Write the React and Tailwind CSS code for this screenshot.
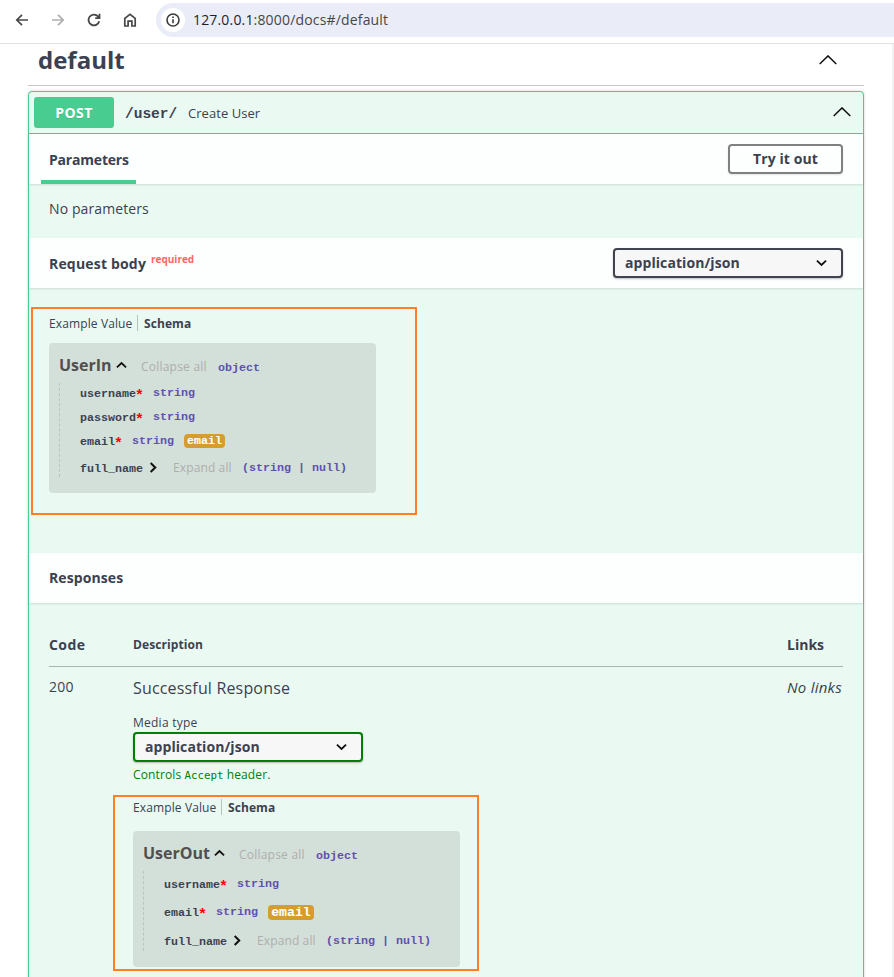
import React from "react";

const MONO = "font-['Liberation_Mono',monospace] text-[11.67px] leading-4 font-bold whitespace-pre";

function Chevron({ dir = "up", size = 10, w = 1.8, className = "" }) {
  const paths = { up: "M1 8 L6 3.4 L11 8", down: "M1 4 L6 8.6 L11 4", right: "M4 1 L9 6 L4 11" };
  return (
    <svg width={size} height={size} viewBox="0 0 12 12" fill="none" stroke="#111" strokeWidth={w} className={"shrink-0 " + className}>
      <path d={paths[dir]} />
    </svg>
  );
}

function BigChevron({ className = "" }) {
  return (
    <svg width="18" height="10" viewBox="0 0 18 10" fill="none" stroke="#111" strokeWidth="1.5" className={"shrink-0 " + className}>
      <path d="M0.7 9 L9 0.9 L17.3 9" />
    </svg>
  );
}

function SectionHeader({ children }) {
  return (
    <div className="flex h-[50px] shrink-0 items-center justify-between bg-[#fdfffe] px-5 shadow-[0_1px_2px_rgba(0,0,0,0.12)]">
      {children}
    </div>
  );
}

function Select({ green = false }) {
  return (
    <div className={"flex h-[30px] w-[230px] items-center justify-between rounded border-2 bg-[#f7f7f7] pr-[14px] pl-[10px] shadow-[0_1px_2px_rgba(0,0,0,0.25)] " + (green ? "border-[#008000]" : "border-[#41444e]")}>
      <span className="text-sm font-bold tracking-[0.08px]">application/json</span>
      <Chevron dir="down" w={2} size={11} className="-mt-px" />
    </div>
  );
}

function Tabs() {
  return (
    <div className="flex h-4 items-center text-xs whitespace-nowrap">
      <span className="w-[88px] pt-[2px] tracking-[0.12px]">Example Value</span>
      <span className="h-4 w-[7px] border-l border-[#b5c3bd]" />
      <span className="pt-[2px] font-bold tracking-[0.08px]">Schema</span>
    </div>
  );
}

function Field({ name, required, format, badge, className = "" }) {
  return (
    <div className={"flex h-4 items-center " + className}>
      <span className={MONO + " pt-[2px] text-[#3b4151]"}>{name}</span>
      {required && (
        <span className="w-[7px] pt-[7px] font-['Liberation_Mono',monospace] text-[15px] leading-4 font-bold text-[#f00] -indent-px">*</span>
      )}
      <span className={MONO + " ml-[10px] text-[#6050b0]"}>string</span>
      {format && (
        <span className={"ml-[10px] flex items-center justify-center rounded bg-[#d69d2e] pt-[2px] font-['Liberation_Mono',monospace] leading-none font-bold text-white " + badge}>
          {format}
        </span>
      )}
    </div>
  );
}

function FullName({ className = "" }) {
  return (
    <div className={"flex h-4 items-center " + className}>
      <span className={MONO + " w-[67px] pt-[2px] text-[#3b4151]"}>full_name</span>
      <Chevron dir="right" w={2.2} size={11} className="-mt-[2px]" />
      <span className="-mt-px ml-[15px] w-[69px] text-xs tracking-[0.12px] whitespace-nowrap text-[#afaeae]">Expand all</span>
      <span className={MONO + " text-[#6050b0]"}>(string | null)</span>
    </div>
  );
}

function ModelTitle({ name, width }) {
  return (
    <div className="flex h-6 items-center whitespace-nowrap">
      <span className={"text-base font-bold text-[#505050] " + width}>{name}</span>
      <Chevron w={2} size={11} />
      <span className="mt-[3px] ml-[14px] w-[77px] text-xs tracking-[0.22px] text-[#afaeae]">Collapse all</span>
      <span className={MONO + " mt-[6px] text-[#6050b0]"}>object</span>
    </div>
  );
}

function Toolbar() {
  return (
    <div className="flex h-11 shrink-0 items-start border-b border-[#dfe1e2] bg-white pt-[3px] pl-[14px] text-[#3c3c3c]">
      <div className="flex h-[34px] items-center">
        <svg width="16" height="16" viewBox="0 0 16 16" fill="none" stroke="#454746" strokeWidth="1.7">
          <path d="M14 8H3M8 2.8L2.8 8L8 13.2" />
        </svg>
        <svg width="16" height="16" viewBox="0 0 16 16" fill="none" stroke="#adaeae" strokeWidth="1.7" className="ml-5">
          <path d="M2 8H13M8 2.8L13.2 8L8 13.2" />
        </svg>
        <svg width="16" height="16" viewBox="0 0 16 16" fill="none" stroke="#454746" strokeWidth="1.8" className="ml-5">
          <path d="M13.2 9.2A5.4 5.4 0 1 1 12 4.4L13.4 5.8M13.5 1.8V6.2H9.2" />
        </svg>
        <svg width="16" height="16" viewBox="0 0 16 16" fill="none" stroke="#454746" strokeWidth="1.7" className="ml-5">
          <path d="M2.8 14V6.4L8 2.3L13.2 6.4V14H9.9V9.2H6.1V14Z" />
        </svg>
      </div>
      <div className="ml-[18px] flex h-[34px] grow items-center rounded-l-full bg-[#eaedf7] pl-[5px]">
        <span className="flex size-6 items-center justify-center rounded-full bg-white">
          <svg width="14" height="14" viewBox="0 0 14 14" fill="none" stroke="#3c3c3c" strokeWidth="1.6">
            <circle cx="7" cy="7" r="6" />
            <path d="M7 6.2V10.3M7 3.6V5.1" />
          </svg>
        </span>
        <span className="ml-2 text-sm tracking-[0.17px] whitespace-nowrap text-[#474747]">
          <span className="text-[#1f1f1f]">127.0.0.1</span>:8000/docs#/default
        </span>
      </div>
    </div>
  );
}

export default function App() {
  return (
    <div className="relative flex h-[977px] w-[894px] flex-col overflow-hidden bg-white font-['Open_Sans','Noto_Sans',sans-serif] text-[#3b4151]">
      <Toolbar />
      <div className="flex grow justify-between">
        <div className="ml-7 flex w-[836px] flex-col">
          <div className="flex h-[42px] shrink-0 items-center justify-between border-b border-[#c4c6ca] pr-[27px] pb-[9px] pl-[10px]">
            <h1 className="text-2xl font-bold">default</h1>
            <BigChevron />
          </div>

          <div className="mt-[5px] flex h-[900px] shrink-0 flex-col rounded border border-[#49cc90] bg-[#eafaf3] shadow-[0_0_3px_rgba(0,0,0,0.19)]">
            <div className="flex h-[42px] shrink-0 items-center border-b border-[#49cc90] px-[5px]">
              <span className="flex h-[31px] w-20 items-center justify-center rounded-[3px] bg-[#49cc90] text-sm font-bold tracking-[0.4px] text-white [text-shadow:0_1px_0_rgba(0,0,0,0.1)]">POST</span>
              <span className="ml-[11px] w-[63px] pt-[5px] font-['Liberation_Mono',monospace] text-[14.5px] font-bold">/user/</span>
              <span className="pt-[2px] text-[13px] tracking-[0.05px]">Create User</span>
              <BigChevron className="mr-[7px] mb-[2px] ml-auto" />
            </div>

            <SectionHeader>
              <div className="-ml-2 flex h-[50px] w-[95px] flex-col border-b-4 border-[#49cc90] pt-4 pl-2">
                <span className="text-sm font-bold tracking-[-0.2px]">Parameters</span>
              </div>
              <button className="h-[30px] w-[115px] rounded border-2 border-[#808080] text-sm font-bold tracking-[0.08px] shadow-[0_1px_2px_rgba(0,0,0,0.1)]">Try it out</button>
            </SectionHeader>
            <div className="h-[54px] shrink-0 px-5 pt-[15px] text-sm tracking-[0.1px]">No parameters</div>

            <SectionHeader>
              <div className="flex pt-[2px] whitespace-nowrap">
                <span className="w-[102px] text-sm font-bold tracking-[0.18px]">Request body</span>
                <span className="-mt-[2px] text-[10px] font-bold text-[#f66]">required</span>
              </div>
              <Select />
            </SectionHeader>
            <div className="flex h-[265px] shrink-0 flex-col px-5 pt-[27px]">
              <Tabs />
              <div className="mt-[12px] h-[150px] w-[327px] rounded bg-[#d3e0d9] pt-[10px] pl-[10px]">
                <ModelTitle name="UserIn" width="w-[57px]" />
                <div className="mt-[6px] flex h-[94px] flex-col border-l border-dashed border-[#b8c4be] pl-5">
                  <Field name="username" required className="mt-[2px]" />
                  <Field name="password" required className="mt-2" />
                  <Field name="email" required format="email" badge="h-[14px] w-[41px] text-[11.67px]" className="mt-2" />
                  <FullName className="mt-[11px]" />
                </div>
              </div>
            </div>

            <SectionHeader>
              <span className="text-sm font-bold tracking-[0.1px]">Responses</span>
            </SectionHeader>
            <div className="flex flex-col px-5 pt-[22px]">
              <div className="flex h-[42px] items-center border-b border-[#a9b5b3] pb-[2px] font-bold">
                <span className="w-[84px] text-sm tracking-[0.4px]">Code</span>
                <span className="text-xs tracking-[0.1px]">Description</span>
                <span className="ml-auto w-14 text-sm">Links</span>
              </div>
              <div className="flex items-start pt-[10px]">
                <span className="w-[84px] text-sm tracking-[0.3px]">200</span>
                <div className="flex flex-col">
                  <span className="-mt-px h-[25px] text-base tracking-[0.17px]">Successful Response</span>
                  <span className="mt-[14px] h-[17px] text-xs tracking-[0.25px]">Media type</span>
                  <Select green />
                  <span className="mt-[5px] h-4 text-xs leading-4 tracking-[0.12px] whitespace-nowrap text-[#008000]">
                    Controls <span className="font-['DejaVu_Sans_Mono',monospace] text-[10.8px] tracking-normal">Accept</span> header.
                  </span>
                  <div className="mt-[16px]"><Tabs /></div>
                  <div className="mt-[16px] h-[136px] w-[327px] rounded bg-[#d3e0d9] pt-[10px] pl-[10px]">
                    <ModelTitle name="UserOut" width="w-[71px]" />
                    <div className="mt-[6px] flex h-20 flex-col border-l border-dashed border-[#b8c4be] pl-5">
                      <Field name="username" required className="mt-[5px]" />
                      <Field name="email" required format="email" badge="h-[15px] w-[46px] text-[13.2px]" className="mt-3" />
                      <FullName className="mt-[13px]" />
                    </div>
                  </div>
                </div>
                <span className="-mr-1 ml-auto w-[60px] text-[15px] leading-5 tracking-[0.25px] whitespace-nowrap italic">No links</span>
              </div>
            </div>
          </div>
        </div>
        <div className="w-[2px] bg-[#f1f1f1]" />
      </div>

      <div className="absolute top-[307px] left-[31px] h-[208px] w-[386px] border-2 border-[#ff7f27]" />
      <div className="absolute top-[795px] left-[113px] h-[176px] w-[366px] border-2 border-[#ff7f27]" />
    </div>
  );
}
